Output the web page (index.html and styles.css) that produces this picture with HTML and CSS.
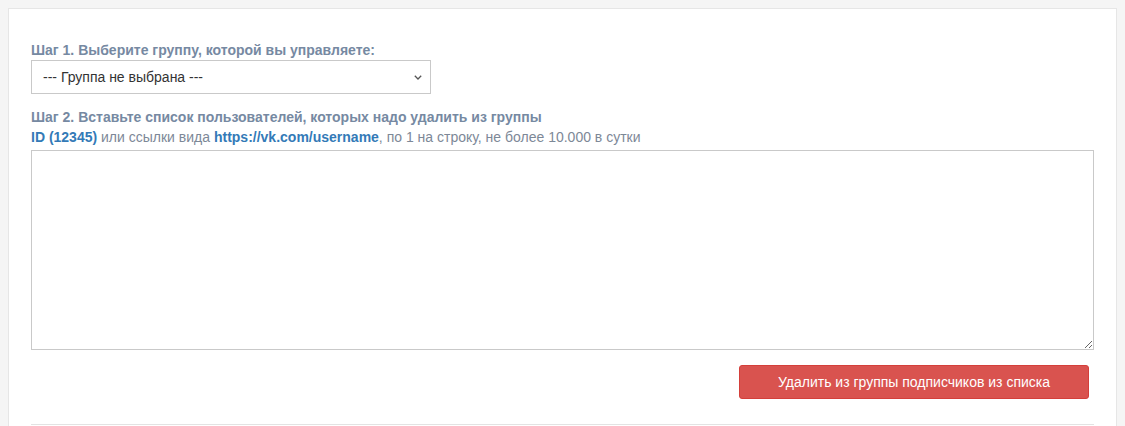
FILE: index.html
```html
<!DOCTYPE html>
<html lang="ru">
<head>
<meta charset="utf-8">
<title>Удалить из группы</title>
<link rel="stylesheet" href="styles.css">
</head>
<body>
<div class="panel">
  <label class="step" for="grp">Шаг 1. Выберите группу, которой вы управляете:</label>
  <div class="select-wrap">
    <select id="grp" class="select">
      <option>--- Группа не выбрана ---</option>
    </select>
    <svg class="chev" width="8" height="5" viewBox="0 0 8 5" aria-hidden="true"><path d="M0.8 0.8 L4 4 L7.2 0.8" fill="none" stroke="#555" stroke-width="1.3"/></svg>
  </div>
  <div class="step step2">Шаг 2. Вставьте список пользователей, которых надо удалить из группы</div>
  <div class="hint"><b class="link">ID (12345)</b> или ссылки вида <b class="link">https://vk.com/username</b>, по 1 на строку, не более 10.000 в сутки</div>
  <textarea class="area"></textarea>
  <div class="actions">
    <button class="btn-danger" type="button">Удалить из группы подписчиков из списка</button>
  </div>
  <hr class="sep">
</div>
</body>
</html>
```
FILE: styles.css
```css
html, body {
  margin: 0;
  padding: 0;
  background: #f5f5f5;
  font-family: "Liberation Sans", Arial, sans-serif;
  font-size: 14px;
  line-height: 20px;
  color: #333;
}
.panel {
  margin: 8px 8px 0 8px;
  background: #fff;
  border: 1px solid #e6e6e6;
  border-bottom: none;
  padding: 31px 22px 40px 22px;
  min-height: 420px;
  box-sizing: border-box;
}
.step {
  display: block;
  font-weight: bold;
  color: #7689a2;
}
.select-wrap {
  position: relative;
  width: 400px;
}
.select {
  display: block;
  -webkit-appearance: none;
  appearance: none;
  width: 400px;
  height: 34px;
  margin: 0;
  padding: 0 11px;
  border: 1px solid #c9c9c9;
  border-radius: 0;
  background: #fff;
  font-family: inherit;
  font-size: 14px;
  color: #333;
}
.chev {
  position: absolute;
  right: 9px;
  top: 15px;
  pointer-events: none;
}
.step2 {
  margin-top: 13px;
}
.hint {
  color: #7d8897;
}
.link {
  color: #337ab7;
}
.area {
  display: block;
  box-sizing: border-box;
  width: 100%;
  height: 200px;
  margin: 3px 0 0 0;
  border: 1px solid #c9c9c9;
  border-radius: 0;
  padding: 6px 10px;
  font-family: inherit;
  font-size: 14px;
  resize: vertical;
}
.actions {
  display: flex;
  justify-content: flex-end;
  margin-top: 15px;
  padding-right: 5px;
}
.btn-danger {
  width: 350px;
  height: 34px;
  background: #d9534f;
  border: 1px solid #d43f3a;
  border-radius: 3px;
  color: #fff;
  font-family: inherit;
  font-size: 14px;
}
.sep {
  margin: 25px 0 0 0;
  border: 0;
  border-top: 1px solid #e3e3e3;
}
```
